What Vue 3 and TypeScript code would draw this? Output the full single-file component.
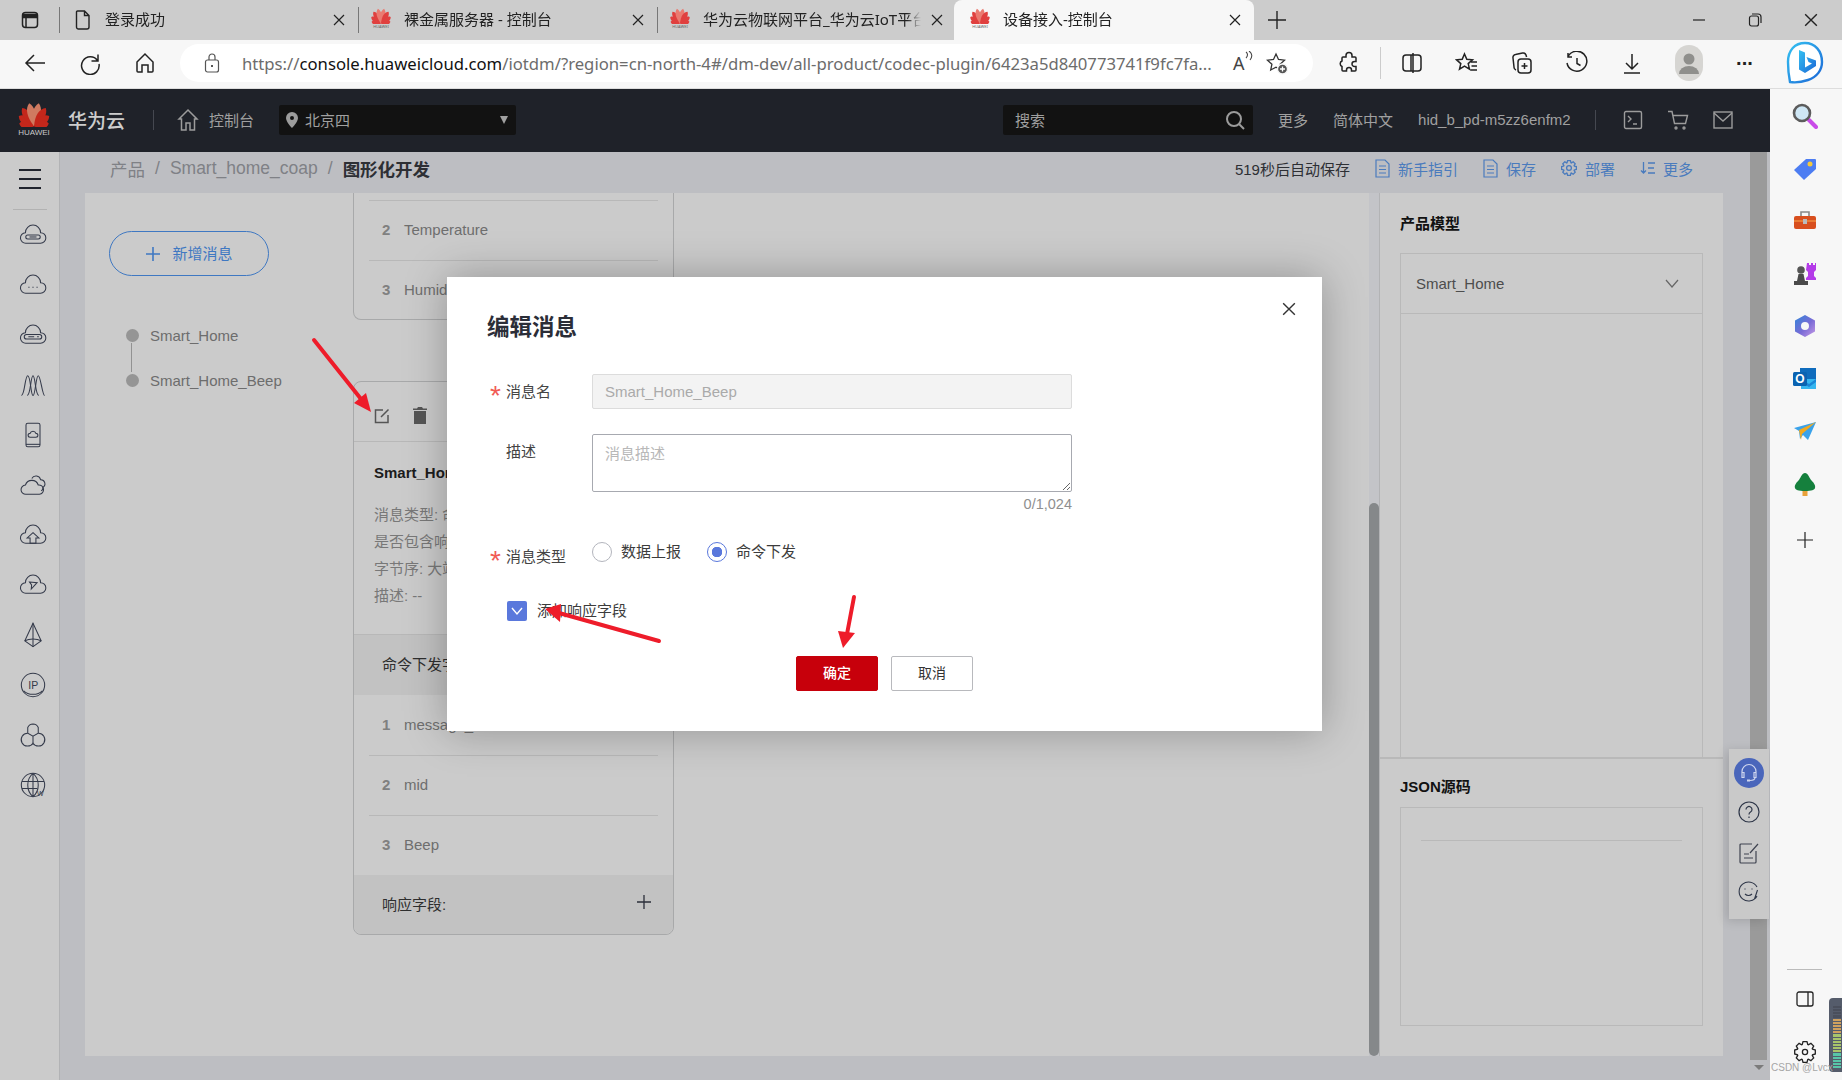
<template>
  <div class="app">
    <svg class="defs" width="0" height="0">
      <symbol id="hw-petals" viewBox="0 0 40 30">
        <path
          v-for="p in petals"
          :key="p.angle"
          :d="p.d"
          :class="{ 'petal-mid': p.mid }"
          :transform="`rotate(${p.angle} 20 29)`"
        />
      </symbol>
      <symbol id="x-mark" viewBox="0 0 12 12">
        <path d="M1 1l10 10M11 1L1 11" fill="none" stroke="currentColor" stroke-width="1.2" />
      </symbol>
    </svg>

    <!-- browser tabs -->
    <div class="tabbar">
      <svg class="strip-icon" width="20" height="20" viewBox="0 0 20 20" fill="none" stroke="#222" stroke-width="1.5">
        <rect x="2.5" y="2.5" width="15" height="15" rx="3" />
        <path d="M3 4.5h14v3H3z" fill="#222" />
        <path d="M6 7v10" />
      </svg>
      <div
        v-for="tab in tabs"
        :key="tab.title"
        class="tab"
        :class="{ active: tab.active }"
      >
        <svg v-if="tab.doc" class="tab-doc" width="16" height="20" viewBox="0 0 16 20" fill="none" stroke="#222" stroke-width="1.4">
          <path d="M2.5 1h7l4.5 4.5V17a2 2 0 0 1-2 2H3.500a2 2 0 0 1-2-2V2a1 1 0 0 1 1-1zM9.500 1v4.500H14" />
        </svg>
        <span v-else class="tab-logo">
          <svg width="22" height="16"><use href="#hw-petals" /></svg>
          <i>HUAWEI</i>
        </span>
        <span class="tab-title">{{ tab.title }}</span>
        <svg class="tab-x" width="12" height="12"><use href="#x-mark" /></svg>
      </div>
      <svg class="new-tab" width="20" height="20" viewBox="0 0 20 20" stroke="#222" stroke-width="1.4"><path d="M10 1v18M1 10h18" /></svg>
      <div class="win-btns">
        <svg width="14" height="14" viewBox="0 0 14 14" stroke="#222" stroke-width="1.2"><path d="M1 7h12" /></svg>
        <svg width="14" height="14" viewBox="0 0 14 14" fill="none" stroke="#222" stroke-width="1.2"><rect x="1.500" y="3" width="9" height="10" rx="2" /><path d="M4 1h6a3 3 0 0 1 3 3v6" /></svg>
        <svg width="14" height="14" style="color:#222"><use href="#x-mark" /></svg>
      </div>
    </div>

    <!-- address bar -->
    <div class="addressbar">
      <div class="nav-btns">
        <svg width="24" height="24" viewBox="0 0 24 24" fill="none" stroke="#222" stroke-width="1.500"><path d="M22 12H3M11 4l-8 8 8 8" /></svg>
        <svg width="24" height="24" viewBox="0 0 24 24" fill="none" stroke="#222" stroke-width="1.500"><path d="M19.500 9.500A8.800 8.800 0 1 0 21 13M20 3.500v6.500h-6.500" /></svg>
        <svg width="24" height="24" viewBox="0 0 24 24" fill="none" stroke="#222" stroke-width="1.500"><path d="M4 11l8-8 8 8v9a1 1 0 0 1-1 1h-4v-7H9v7H5a1 1 0 0 1-1-1z" /></svg>
      </div>
      <div class="url-pill">
        <svg width="16" height="20" viewBox="0 0 16 20" fill="none" stroke="#555" stroke-width="1.200"><rect x="1.500" y="7" width="13" height="12" rx="2" /><path d="M5 7V4a3 3 0 0 1 6 0v3" /><path d="M8 12v2" stroke-width="2" /></svg>
        <span class="url"><em>https://</em><b>console.huaweicloud.com</b><em>/iotdm/?region=cn-north-4#/dm-dev/all-product/codec-plugin/6423a5d840773741f9fc7fa...</em></span>
        <span class="read-a">A<svg width="8" height="14" viewBox="0 0 8 14" fill="none" stroke="#444" stroke-width="1.100"><path d="M1 1c2 1.500 2 4 0 6M4 0c3.500 2.500 3.500 6 1 9" /></svg></span>
        <svg width="24" height="24" viewBox="0 0 24 24" fill="none" stroke="#333" stroke-width="1.300">
          <path d="M11 3l2.500 5.500 6 .7-4.400 4 1.200 5.800L11 16.200 5.700 19l1.200-5.800-4.400-4 6-.7z" />
          <circle cx="17.500" cy="18" r="5" fill="#555" stroke="#f7f7f7" />
          <path d="M17.500 15.500v5M15 18h5" stroke="#fff" />
        </svg>
      </div>
      <div class="tool-btns">
        <svg class="t1" width="24" height="24" viewBox="0 0 24 24" fill="none" stroke="#222" stroke-width="1.500"><path d="M9 6V4.500a3 3 0 0 1 6 0V6h3a1 1 0 0 1 1 1v3.500h-1.500a2.500 2.500 0 0 0 0 5H19V19a1 1 0 0 1-1 1h-3.500v-1a2.500 2.500 0 0 0-5 0v1H6a1 1 0 0 1-1-1v-3.500a3 3 0 0 1 0-5.500V7a1 1 0 0 1 1-1z" /></svg>
        <span class="tool-sep"></span>
        <svg width="24" height="24" viewBox="0 0 24 24" fill="none" stroke="#222" stroke-width="1.500"><rect x="3" y="4" width="18" height="16" rx="3" /><path d="M11 4v16M13 2v20" /></svg>
        <svg width="24" height="24" viewBox="0 0 24 24" fill="none" stroke="#222" stroke-width="1.500"><path d="M9.500 3l2.300 5.300 5.700.5-4.300 3.800 1.300 5.600-5-3-5 3 1.300-5.600L1.500 8.800l5.700-.5zM16 11h6M16.500 15h5.500M15.500 19H22" /></svg>
        <svg width="24" height="24" viewBox="0 0 24 24" fill="none" stroke="#222" stroke-width="1.500"><rect x="8" y="8" width="13" height="14" rx="3" /><path d="M14.500 12v6M11.500 15h6M6 19a3 3 0 0 1-2-3L3 7a3 3 0 0 1 2.500-3.500l7-1.500a3 3 0 0 1 3.500 2l.6 2" /></svg>
        <svg width="24" height="24" viewBox="0 0 24 24" fill="none" stroke="#222" stroke-width="1.500"><path d="M3 5.500A10 10 0 1 1 2 12M3 2v4h4M12 7v5.500l3.500 2" /></svg>
        <svg width="24" height="24" viewBox="0 0 24 24" fill="none" stroke="#222" stroke-width="1.500"><path d="M12 3v15M6 12l6 6 6-6M4 22h16" /></svg>
        <span class="avatar">
          <svg width="28" height="28" viewBox="0 0 28 28" fill="#8f8f8c"><circle cx="14" cy="10" r="5.500" /><path d="M4 25a10 8 0 0 1 20 0z" /></svg>
        </span>
        <span class="dots">···</span>
      </div>
      <div class="bing">
        <svg width="40" height="48" viewBox="0 0 40 48">
          <defs>
            <linearGradient id="bing-g" x1="0" y1="0" x2="1" y2="1">
              <stop offset="0" stop-color="#35c1f1" />
              <stop offset="1" stop-color="#1b66d6" />
            </linearGradient>
          </defs>
          <path d="M20 3C10 3 3 10 3 22c0 8 1 15 2 20 6 1 12 0 18-2 9-3 14-10 14-18C37 11 30 3 20 3z" fill="#fff" stroke="url(#bing-g)" stroke-width="2.400" />
          <path d="M14 10l6 2.500v15l7-4-3.500-1.600-2-5 9.500 3.500v5.500L20 33l-6-3.500z" fill="url(#bing-g)" />
        </svg>
      </div>
    </div>

    <div class="lower">
      <div class="console">
        <header class="top-header">
          <div class="hw-logo">
            <svg width="34" height="25"><use href="#hw-petals" /></svg>
            <span>HUAWEI</span>
          </div>
          <span class="brand">华为云</span>
          <span class="head-sep"></span>
          <svg class="home-ico" width="22" height="24" viewBox="0 0 22 24" fill="none" stroke="#9c9c9c" stroke-width="1.500"><path d="M2 11l9-9 9 9h-2.500v11H13v-7H9v7H4.500V11z" /></svg>
          <span class="console-link">控制台</span>
          <div class="region">
            <svg width="12" height="16" viewBox="0 0 12 16" fill="#9c9c9c"><path d="M6 0a6 6 0 0 1 6 6c0 4-6 10-6 10S0 10 0 6a6 6 0 0 1 6-6zm0 4a2 2 0 1 0 0 4 2 2 0 0 0 0-4z" /></svg>
            <span>北京四</span>
            <i class="caret"></i>
          </div>
          <div class="search">
            <span>搜索</span>
            <svg width="20" height="20" viewBox="0 0 20 20" fill="none" stroke="#9c9c9c" stroke-width="2"><circle cx="9" cy="9" r="7" /><path d="M14 14l5 5" /></svg>
          </div>
          <span class="head-link">更多</span>
          <span class="head-link">简体中文</span>
          <span class="head-link">hid_b_pd-m5zz6enfm2</span>
          <span class="head-sep sep2"></span>
          <div class="head-icons">
            <svg width="20" height="20" viewBox="0 0 20 20" fill="none" stroke="#9c9c9c" stroke-width="1.400"><rect x="1.500" y="1.500" width="17" height="17" rx="1.500" /><path d="M5 6l3 3-3 3M10 14h4" /></svg>
            <svg width="22" height="20" viewBox="0 0 22 20" fill="none" stroke="#9c9c9c" stroke-width="1.400"><path d="M1 1.500h4l2.500 12h11l2-8H6" /><circle cx="9" cy="18" r="1" /><circle cx="17" cy="18" r="1" /></svg>
            <svg width="20" height="20" viewBox="0 0 20 20" fill="none" stroke="#9c9c9c" stroke-width="1.400"><rect x="1" y="2" width="18" height="16" /><path d="M1 3l9 8 9-8" /></svg>
          </div>
        </header>

        <div class="body">
          <nav class="left-nav">
            <div class="hamburger"><i></i><i></i><i></i></div>
            <div class="nav-divider"></div>
            <div v-for="(icon, i) in navIcons" :key="i" class="nav-cell">
              <svg width="28" height="28" viewBox="0 0 24 24" fill="none" stroke="#343a4a" stroke-width="0.9">
                <path v-for="d in icon.paths" :key="d" :d="d" />
                <text v-if="icon.label" :x="icon.lx" :y="icon.ly" :font-size="icon.fs" class="nav-ico-text">{{ icon.label }}</text>
              </svg>
            </div>
          </nav>

          <div class="page">
            <div class="crumbs">
              <span class="crumb">产品</span>
              <span class="crumb slash">/</span>
              <span class="crumb">Smart_home_coap</span>
              <span class="crumb slash">/</span>
              <span class="crumb current">图形化开发</span>
              <span class="autosave">519秒后自动保存</span>
              <a class="act">
                <svg width="15" height="19" viewBox="0 0 15 19" fill="none" stroke="currentColor" stroke-width="1.200"><path d="M1 1h9l4 4v13H1zM4 7h7M4 10.500h7M4 14h7" /></svg>
                新手指引
              </a>
              <a class="act">
                <svg width="15" height="19" viewBox="0 0 15 19" fill="none" stroke="currentColor" stroke-width="1.200"><path d="M1 1h9l4 4v13H1zM4 7h7M4 10.500h7M4 14h7" /></svg>
                保存
              </a>
              <a class="act">
                <svg width="16" height="16" viewBox="0 0 16 16" fill="none" stroke="currentColor" stroke-width="1.300"><path :d="gearSmall" /><circle cx="8" cy="8" r="2.400" /></svg>
                部署
              </a>
              <a class="act">
                <svg width="15" height="14" viewBox="0 0 15 14" fill="none" stroke="currentColor" stroke-width="1.300"><path d="M3.500 1v11M1 9.500L3.500 12 6 9.500M8 2h7M8 7h6M8 12h7" /></svg>
                更多
              </a>
            </div>

            <main class="panel">
              <section class="msg-col">
                <button class="add-btn">
                  <svg width="16" height="16" viewBox="0 0 16 16" stroke="currentColor" stroke-width="1.600"><path d="M8 1v14M1 8h14" /></svg>
                  <span>新增消息</span>
                </button>
                <ul class="msg-list">
                  <li v-for="m in messages" :key="m"><i></i>{{ m }}</li>
                </ul>
              </section>

              <section class="card-col">
                <div class="card upper">
                  <div v-for="(f, i) in upperFields" :key="f" class="field-row lined">
                    <b>{{ i + 2 }}</b><span>{{ f }}</span>
                  </div>
                </div>

                <div class="card lower-card">
                  <div class="card-tools">
                    <svg width="16" height="16" viewBox="0 0 16 16" fill="none" stroke="#555" stroke-width="1.500"><path d="M9 2H1.500v12.500H14V7M7 9l7.500-7.500" /></svg>
                    <svg width="14" height="17" viewBox="0 0 14 17" fill="#555"><path d="M5 0h4l1 1.500h4V3H0V1.500h4zM1 4h12v13H1z" /></svg>
                  </div>
                  <div class="card-info">
                    <h4>Smart_Home_Beep</h4>
                    <p>消息类型: 命令下发</p>
                    <p>是否包含响应字段: 否</p>
                    <p>字节序: 大端模式</p>
                    <p>描述: --</p>
                  </div>
                  <div class="card-section"><span>命令下发字段:</span></div>
                  <div v-for="(f, i) in commandFields" :key="f" class="field-row" :class="{ lined: i > 0 }">
                    <b>{{ i + 1 }}</b><span>{{ f }}</span>
                  </div>
                  <div class="card-section foot">
                    <span>响应字段:</span>
                    <svg width="14" height="14" viewBox="0 0 14 14" stroke="#2b2f3a" stroke-width="1.300"><path d="M7 0v14M0 7h14" /></svg>
                  </div>
                </div>
              </section>

              <section class="canvas"></section>
              <div class="inner-scroll"><i></i></div>

              <aside class="model-col">
                <div class="model-top">
                  <h5>产品模型</h5>
                  <div class="model-box">
                    <div class="model-head">
                      Smart_Home
                      <svg width="14" height="9" viewBox="0 0 14 9" fill="none" stroke="#666" stroke-width="1.200"><path d="M1 1l6 7 6-7" /></svg>
                    </div>
                  </div>
                </div>
                <div class="model-json">
                  <h5>JSON源码</h5>
                  <div class="json-box"><i></i></div>
                </div>
              </aside>
            </main>
          </div>

          <div class="page-scroll"><i></i><b></b></div>

          <div class="help-float">
            <span class="help-main">
              <svg width="22" height="22" viewBox="0 0 22 22" fill="none" stroke="#cfd6ee" stroke-width="1.200"><path d="M4 12V9.500a7 7 0 0 1 14 0V12M4 10.500h2v5H4zM16 10.500h2v5h-2zM17 15.500c0 2-2 3-5 3" /><path d="M9 18.500h3" stroke-width="2" /></svg>
            </span>
            <svg class="h-q" width="22" height="22" viewBox="0 0 22 22" fill="none" stroke="#2e3648" stroke-width="1.200"><circle cx="11" cy="11" r="10" /><path d="M8 8.500a3 3 0 1 1 4.500 2.600c-1 .6-1.500 1.200-1.500 2.400M11 15.500v1.500" /></svg>
            <svg class="h-note" width="20" height="22" viewBox="0 0 20 22" fill="none" stroke="#3f4350" stroke-width="1.200"><path d="M13 2H2a1 1 0 0 0-1 1v17a1 1 0 0 0 1 1h14a1 1 0 0 0 1-1V9M11 11l8-9M5 12h5M5 16h9" /></svg>
            <svg class="h-smile" width="22" height="22" viewBox="0 0 22 22" fill="none" stroke="#2e3648" stroke-width="1.100"><path d="M19 7a9.500 9.500 0 1 0 0 9M7 8.500v1M14 8.500v1M7 14c2 2 5 2 7 0M19.500 10l-3 9" /></svg>
          </div>
        </div>
      </div>

      <aside class="edge-bar">
        <div class="edge-apps">
          <svg width="26" height="26" viewBox="0 0 26 26">
            <path d="M17 17l7 7" stroke="#c94be8" stroke-width="4" stroke-linecap="round" />
            <circle cx="10" cy="10" r="8" fill="#cfe7f5" stroke="#5c5c5c" stroke-width="2.600" />
          </svg>
          <svg width="24" height="24" viewBox="0 0 24 24">
            <path d="M13 2h9a1 1 0 0 1 1 1v9L11 23 1 13z" fill="#4d7df2" />
            <circle cx="17" cy="7" r="2.500" fill="#f5c93a" />
          </svg>
          <svg width="24" height="24" viewBox="0 0 24 24">
            <path d="M8 7V3h8v4" fill="none" stroke="#888" stroke-width="1.600" />
            <rect x="1" y="7" width="22" height="13" rx="2" fill="#d84f1e" />
            <path d="M1 12h22" stroke="#f08a3c" stroke-width="1.500" />
            <rect x="10" y="10" width="4" height="5" fill="#bbb" />
          </svg>
          <svg width="24" height="24" viewBox="0 0 24 24">
            <path d="M14 1h2v2h2V1h2v2h2V1h1v7l-2 2v4l2 2v2H13v-2l2-2v-4l-2-2z" fill="#b43be8" />
            <circle cx="8" cy="8" r="3.800" fill="#555" />
            <path d="M5.500 12h5L12 19h3v4H1v-4h3z" fill="#4a4a4a" />
          </svg>
          <svg width="24" height="24" viewBox="0 0 24 24">
            <defs>
              <linearGradient id="m365" x1="0" y1="0" x2="1" y2="1">
                <stop offset="0" stop-color="#2f86d9" />
                <stop offset=".55" stop-color="#7a6bd6" />
                <stop offset="1" stop-color="#c79be6" />
              </linearGradient>
            </defs>
            <path d="M12 1l10 5.500v11L12 23 2 17.500v-11zM12 8a4 4 0 1 0 0 8 4 4 0 0 0 0-8z" fill="url(#m365)" fill-rule="evenodd" />
          </svg>
          <svg width="24" height="24" viewBox="0 0 24 24">
            <rect x="7" y="1" width="16" height="11" fill="#0f6cbd" />
            <path d="M8 12h15v10H8z" fill="#35b6f0" />
            <path d="M8 12l8 5 7-5v3l-7 5-8-5z" fill="#1a86d6" />
            <rect x="0" y="5" width="14" height="14" rx="1.500" fill="#0a63b1" />
            <text x="7" y="16" text-anchor="middle" class="outlook-o">O</text>
          </svg>
          <svg width="24" height="20" viewBox="0 0 24 20">
            <path d="M1 7l22-6-8 18-5-5-3 4-1-8z" fill="#3aa2ea" />
            <path d="M6 9L23 1 9 13l-1 6z" fill="#f2a91f" />
          </svg>
          <svg width="22" height="24" viewBox="0 0 22 24">
            <rect x="8.500" y="17" width="5" height="7" fill="#e9a23b" />
            <path d="M11 1c3 0 4 4 6 7 2 2 5 5 4 8-.6 2-3 3-10 3S1.600 18 1 16c-1-3 2-6 4-8 2-3 3-7 6-7z" fill="#15803d" />
          </svg>
          <svg class="edge-plus" width="16" height="16" viewBox="0 0 16 16" stroke="#222" stroke-width="1.200"><path d="M8 0v16M0 8h16" /></svg>
        </div>
        <div class="edge-foot">
          <span class="edge-line"></span>
          <svg width="18" height="16" viewBox="0 0 18 16" fill="none" stroke="#222" stroke-width="1.300"><rect x="1" y="1" width="16" height="14" rx="2" /><path d="M12 1v14" /></svg>
          <svg class="edge-gear" width="22" height="22" viewBox="0 0 22 22" fill="none" stroke="#222" stroke-width="1.300"><path :d="gearLarge" /><circle cx="11" cy="11" r="2.600" /></svg>
          <div class="meter"><i v-for="c in meterBars" :key="c.id" :style="{ background: c.color }"></i></div>
          <span class="wm">CSDN @Lvcx</span>
        </div>
      </aside>
    </div>

    <!-- edit dialog -->
    <div class="modal">
      <svg class="modal-x" width="14" height="14"><use href="#x-mark" /></svg>
      <h2>编辑消息</h2>
      <div class="form-row">
        <label class="req">消息名</label>
        <input class="input" disabled value="Smart_Home_Beep" />
      </div>
      <div class="form-row desc">
        <label>描述</label>
        <textarea class="textarea" placeholder="消息描述"></textarea>
      </div>
      <div class="counter">0/1,024</div>
      <div class="form-row type">
        <label class="req">消息类型</label>
        <div class="radios">
          <span class="radio"><i></i>数据上报</span>
          <span class="radio on"><i></i>命令下发</span>
        </div>
      </div>
      <div class="check-row">
        <span class="check">
          <svg width="12" height="10" viewBox="0 0 12 10" fill="none" stroke="#fff" stroke-width="1.400"><path d="M1 2l5 6 5-6" /></svg>
        </span>
        <span class="check-text">添加响应字段</span>
      </div>
      <div class="modal-btns">
        <button class="btn primary">确定</button>
        <button class="btn">取消</button>
      </div>
    </div>

    <!-- annotation arrows -->
    <svg class="arrows" width="1842" height="1080" fill="none" stroke="#ee1c2a" stroke-width="4" stroke-linecap="round">
      <g v-for="a in arrows" :key="a.id">
        <path :d="a.line" />
        <path :d="a.head" fill="#ee1c2a" stroke="none" />
      </g>
    </svg>
  </div>
</template>

<script setup lang="ts">
interface NavIcon {
  paths: string[];
  label?: string;
  lx?: number;
  ly?: number;
  fs?: number;
}

const tabs = [
  { title: '登录成功', doc: true },
  { title: '裸金属服务器 - 控制台' },
  { title: '华为云物联网平台_华为云IoT平台' },
  { title: '设备接入-控制台', active: true },
];

// huawei flower: one petal per angle, the middle ones longer
const petals = [-80, -56, -33, -12, 12, 33, 56, 80].map((angle) => {
  const a = Math.abs(angle);
  const len = a < 20 ? 28 : a < 40 ? 26 : a < 60 ? 22 : 18;
  const w = 6.2;
  return {
    angle,
    mid: a < 20,
    d: `M20 29C${20 - w} ${29 - len * 0.45} ${20 - w} ${29 - len * 0.8} 20 ${29 - len}C${20 + w} ${29 - len * 0.8} ${20 + w} ${29 - len * 0.45} 20 29Z`,
  };
});

function gear(c: number, outer: number, inner: number, teeth = 8): string {
  const pts: string[] = [];
  const step = (Math.PI * 2) / teeth;
  for (let i = 0; i < teeth; i++) {
    const a = i * step;
    for (const [off, r] of [[-0.3, inner], [-0.16, outer], [0.16, outer], [0.3, inner]] as const) {
      const t = a + off * step * 1.5;
      pts.push(`${(c + Math.cos(t) * r).toFixed(2)} ${(c + Math.sin(t) * r).toFixed(2)}`);
    }
  }
  return `M${pts.join('L')}Z`;
}

const gearSmall = gear(8, 7.5, 5.6);
const gearLarge = gear(11, 10.5, 8);

const cloud = 'M6 19a4.500 4.500 0 0 1-.5-9a6.500 6.500 0 0 1 13 0a4.500 4.500 0 0 1 0 9z';
const navIcons: NavIcon[] = [
  { paths: [cloud, 'M7.500 12h9a1.700 1.700 0 0 1 0 3.400h-9a1.700 1.700 0 0 1 0-3.400z', 'M9 13.700h6'] },
  { paths: [cloud, 'M8 14h1M11.500 14h1M15 14h1'] },
  { paths: [cloud, 'M6.500 11.500h11a1.800 1.800 0 0 1 0 4h-11a1.800 1.800 0 0 1 0-4z', 'M8 13.500h5M15.500 13.500h1.500'] },
  { paths: ['M2 21C5 21 5 4 7.500 4S10 21 12 21', 'M7 21c3 0 3-17 5-17s2 17 5 17', 'M12 21c2 0 2.500-17 4.500-17S20 21 22 21'] },
  { paths: ['M7.500 2h9a1.500 1.500 0 0 1 1.500 1.500v17a1.500 1.500 0 0 1-1.500 1.500h-9A1.500 1.500 0 0 1 6 20.500v-17A1.500 1.500 0 0 1 7.500 2z', 'M6 20h12', 'M9.500 14a1.700 1.700 0 0 1 0-3.400a2.600 2.600 0 0 1 5 0a1.700 1.700 0 0 1 0 3.400z'] },
  { paths: ['M6 20a4 4 0 0 1-.5-8a5.800 5.800 0 0 1 11 0a4 4 0 0 1 1 8z', 'M11 6.500a4 4 0 0 1 7.500 1a3.500 3.500 0 0 1 2 6.500a3 3 0 0 1-1.500 3'] },
  { paths: [cloud, 'M12 10l5 4.500h-2.500V19h-5v-4.500H7z'] },
  { paths: [cloud, 'M9 9.500l6.500.5-5 5.500.3-3.500z'] },
  { paths: ['M12 2L5 17l7 5 7-5z', 'M12 2v20', 'M5 17c4-2 10-2 14 0'] },
  { paths: ['M12 2a10 10 0 1 1 0 20a10 10 0 0 1 0-20z', 'M4 17c4 4 12 4 16 0'], label: 'IP', lx: 8, ly: 15.500, fs: 9 },
  { paths: ['M12 2.500a5 5 0 0 1 4.500 3v5L12 13l-4.500-2.500v-5a5 5 0 0 1 4.500-3z', 'M7.500 10.500a5.500 5.500 0 1 0 4.500 8.500a5.500 5.500 0 1 0 4.500-8.500', 'M12 13v6'] },
  { paths: ['M12 2a10 10 0 1 1 0 20a10 10 0 0 1 0-20z', 'M12 2c-6 5-6 15 0 20M12 2c6 5 6 15 0 20M12 2v20M2.500 9h19M2.500 15h13'], label: 'W', lx: 15.500, ly: 21.500, fs: 6 },
];

const messages = ['Smart_Home', 'Smart_Home_Beep'];
const upperFields = ['Temperature', 'Humidity'];
const commandFields = ['message_id', 'mid', 'Beep'];

// meter beside the gear, green at the bottom and dim on top
const meterBars = Array.from({ length: 20 }, (_, i) => ({
  id: i,
  color: i < 4 ? '#4a4f5c' : i < 9 ? '#cfa05e' : i < 15 ? '#a8c46a' : '#58c6a8',
}));

const arrows = [
  { id: 1, line: 'M314 340L361 399', head: 'M371 412L354 403 366 393Z' },
  { id: 2, line: 'M659 641L559 613', head: 'M545 609L561 604 560 622Z' },
  { id: 3, line: 'M854 597L847 634', head: 'M843 648L838 631 855 633Z' },
];
</script>

<style>
body {
  margin: 0;
  overflow: hidden;
}
</style>

<style scoped>
.app {
  position: relative;
  width: 1842px;
  height: 1080px;
  overflow: hidden;
  display: flex;
  flex-direction: column;
  font-family: "Liberation Sans", "Noto Sans CJK SC", sans-serif;
  font-size: 15px;
  color: #6f6f6f;
  background: #cbcbcb;
}

.defs {
  position: absolute;
}
.petal-mid {
  fill: var(--hw-mid);
}

/* browser tabs */
.tabbar {
  height: 40px;
  flex-shrink: 0;
  background: #cccccc;
  display: flex;
  align-items: center;
  font-family: "Noto Sans", "Noto Sans CJK SC", sans-serif;
  color: #222;
  position: relative;
}
.strip-icon {
  margin-left: 20px;
  margin-right: 19px;
}
.tab {
  width: 299px;
  height: 40px;
  display: flex;
  align-items: center;
  box-sizing: border-box;
  position: relative;
  font-size: 15px;
  padding-left: 13px;
}
.tab.active {
  background: #f7f7f7;
  border-radius: 8px 8px 0 0;
  width: 300px;
  margin-left: -2px;
  padding-left: 16px;
}
.tab:not(.active)::before {
  content: "";
  position: absolute;
  left: 0;
  top: 7px;
  height: 26px;
  width: 1px;
  background: #777;
}
.tab-doc {
  margin: 0 14px 0 3px;
}
.tab-logo {
  width: 22px;
  height: 24px;
  fill: #e0403f;
  --hw-mid: #ea7a70;
  display: flex;
  flex-direction: column;
  align-items: center;
  margin-right: 12px;
  margin-left: -1px;
}
.tab-logo i {
  font-style: normal;
  font-size: 4px;
  line-height: 6px;
  color: #666;
}
.tab-title {
  flex: 1;
  white-space: nowrap;
  overflow: hidden;
  padding-bottom: 3px;
  -webkit-mask-image: linear-gradient(to right, #000 calc(100% - 14px), transparent);
  mask-image: linear-gradient(to right, #000 calc(100% - 14px), transparent);
}
.tab-x {
  color: #222;
  margin: 0 13px 0 10px;
  flex-shrink: 0;
}
.new-tab {
  margin-left: 13px;
}
.win-btns {
  position: absolute;
  right: 24px;
  top: 13px;
  display: flex;
  gap: 42px;
}

/* address bar */
.addressbar {
  height: 49px;
  flex-shrink: 0;
  box-sizing: border-box;
  background: #f7f7f7;
  display: flex;
  align-items: center;
  padding-bottom: 2px;
  border-bottom: 1px solid #ddd;
  position: relative;
}
.nav-btns {
  display: flex;
  gap: 31px;
  margin-left: 23px;
  width: 157px;
}
.url-pill {
  width: 1133px;
  height: 38px;
  background: #fff;
  border-radius: 19px;
  display: flex;
  align-items: center;
  box-sizing: border-box;
  padding-left: 24px;
}
.url {
  margin-left: 22px;
  width: 991px;
  font-family: "Noto Sans", sans-serif;
  font-size: 16.700px;
  white-space: nowrap;
  overflow: hidden;
}
.url em {
  font-style: normal;
  color: #6c6c6c;
}
.url b {
  font-weight: 400;
  color: #111;
}
.read-a {
  width: 32px;
  display: flex;
  align-items: flex-start;
  font-family: "Noto Sans", sans-serif;
  font-size: 18px;
  color: #444;
}
.tool-btns {
  display: flex;
  align-items: center;
  margin-left: 24px;
  gap: 31px;
}
.tool-sep {
  width: 1px;
  height: 32px;
  background: #ccc;
  margin: 0 -12px;
}
.avatar {
  width: 28px;
  height: 36px;
  border-radius: 14px;
  background: #d6d5d2;
  overflow: hidden;
  display: flex;
  align-items: center;
}
.dots {
  font-size: 20px;
  font-weight: 700;
  color: #222;
  width: 24px;
  letter-spacing: -1px;
  margin-left: 2px;
}
.bing {
  position: absolute;
  left: 1785px;
  top: 0;
}

/* everything below the address bar */
.lower {
  flex: 1;
  display: flex;
  min-height: 0;
}
.console {
  width: 1770px;
  display: flex;
  flex-direction: column;
}
.top-header {
  height: 63px;
  flex-shrink: 0;
  box-sizing: border-box;
  background: #1f2229;
  display: flex;
  align-items: center;
  color: #a0a0a0;
  padding-bottom: 2px;
}
.hw-logo {
  width: 34px;
  margin-left: 17px;
  fill: #c3271b;
  --hw-mid: #cf7a60;
  display: flex;
  flex-direction: column;
  align-items: center;
}
.hw-logo span {
  font-size: 8px;
  line-height: 10px;
  color: #c8c8c8;
  margin-top: 1px;
}
.brand {
  font-size: 19px;
  color: #cdcdcd;
  margin-left: 17px;
  font-weight: 500;
}
.head-sep {
  width: 1px;
  height: 20px;
  background: #454850;
  margin-left: 28px;
}
.home-ico {
  margin-left: 23px;
}
.console-link {
  margin-left: 10px;
  width: 70px;
}
.region {
  width: 237px;
  height: 30px;
  box-sizing: border-box;
  background: #121212;
  border-radius: 2px;
  display: flex;
  align-items: center;
  padding: 0 8px 0 7px;
  gap: 7px;
}
.region span {
  flex: 1;
}
.caret {
  border-left: 4px solid transparent;
  border-right: 4px solid transparent;
  border-top: 8px solid #a0a0a0;
}
.search {
  margin-left: 487px;
  width: 250px;
  height: 30px;
  box-sizing: border-box;
  background: #121212;
  border-radius: 2px;
  display: flex;
  align-items: center;
  justify-content: space-between;
  padding: 0 8px 0 12px;
}
.head-link {
  margin-left: 25px;
}
.sep2 {
  margin-left: 24px;
}
.head-icons {
  display: flex;
  align-items: center;
  gap: 24px;
  margin-left: 27px;
}

.body {
  flex: 1;
  display: flex;
  min-height: 0;
  position: relative;
}
.left-nav {
  width: 60px;
  flex-shrink: 0;
  box-sizing: border-box;
  border-right: 1px solid #b2b3b5;
  background: #cbcbcb;
  display: flex;
  flex-direction: column;
  align-items: center;
  padding-top: 17px;
}
.hamburger {
  width: 22px;
  display: flex;
  flex-direction: column;
  gap: 7px;
}
.hamburger i {
  height: 2px;
  background: #20242e;
}
.nav-divider {
  width: 34px;
  height: 1px;
  background: #b2b2b2;
  margin-top: 20px;
}
.nav-cell {
  height: 50px;
  display: flex;
  align-items: center;
  justify-content: center;
  margin-left: 6px;
  flex-shrink: 0;
}
.nav-ico-text {
  font-family: "Liberation Sans", sans-serif;
  fill: #343a4a;
  stroke: none;
}

.page {
  width: 1690px;
  background: #bdbec2;
  display: flex;
  flex-direction: column;
  box-sizing: border-box;
  padding: 0 27px 24px 25px;
}
.crumbs {
  height: 41px;
  flex-shrink: 0;
  box-sizing: border-box;
  display: flex;
  align-items: center;
  color: #2d2f34;
  padding: 0 0 9px 25px;
}
.crumb {
  font-size: 17.500px;
  color: #7f8186;
}
.crumb.slash {
  margin: 0 10px;
}
.crumb.current {
  font-weight: 700;
  color: #2d2f34;
}
.autosave {
  margin-left: auto;
}
.act {
  display: inline-flex;
  align-items: center;
  gap: 8px;
  color: #4a7bbd;
  margin-left: 25px;
}
.act:last-child {
  margin-right: 30px;
}

.panel {
  flex: 1;
  min-height: 0;
  background: #cbcbcb;
  display: flex;
}
.msg-col {
  width: 268px;
  flex-shrink: 0;
  box-sizing: border-box;
  padding: 38px 0 0 24px;
}
.add-btn {
  width: 160px;
  height: 45px;
  border: 1px solid #3f78c2;
  border-radius: 23px;
  background: transparent;
  color: #3f78c2;
  font: inherit;
  display: flex;
  align-items: center;
  justify-content: center;
  gap: 11px;
}
.add-btn span {
  padding-bottom: 2px;
}
.msg-list {
  list-style: none;
  margin: 37px 0 0 17px;
  padding: 0;
}
.msg-list li {
  height: 45px;
  line-height: 45px;
  display: flex;
  align-items: center;
  gap: 11px;
  position: relative;
  color: #6d6d6d;
}
.msg-list li i {
  width: 13px;
  height: 13px;
  border-radius: 50%;
  background: #959595;
}
.msg-list li:first-child::after {
  content: "";
  position: absolute;
  left: 5px;
  top: 30px;
  width: 1px;
  height: 29px;
  background: #929292;
}

.card-col {
  width: 321px;
  flex-shrink: 0;
  display: flex;
  flex-direction: column;
  gap: 61px;
}
.card {
  box-sizing: border-box;
  border: 1px solid #a8a9aa;
}
.card.upper {
  height: 127px;
  border-top: 0;
  border-radius: 0 0 8px 8px;
  padding-top: 7px;
}
.field-row {
  height: 60px;
  margin: 0 15px;
  display: flex;
  align-items: center;
  box-sizing: border-box;
  color: #6e6e6e;
  padding-bottom: 2px;
}
.field-row.lined {
  border-top: 1px solid #b8b8b8;
}
.field-row b {
  width: 22px;
  margin-left: 13px;
  color: #808080;
}
.card.lower-card {
  height: 554px;
  border-radius: 8px;
  display: flex;
  flex-direction: column;
}
.card-tools {
  height: 60px;
  flex-shrink: 0;
  box-sizing: border-box;
  border-bottom: 1px solid #b8b8b8;
  display: flex;
  align-items: center;
  padding: 8px 0 0 20px;
  gap: 23px;
}
.card-info {
  height: 193px;
  flex-shrink: 0;
  box-sizing: border-box;
  padding: 21px 20px 0;
  border-bottom: 1px solid #b8b8b8;
}
.card-info h4 {
  margin: 0 0 18px;
  font-size: 15px;
  line-height: 20px;
  color: #1c1c1c;
}
.card-info p {
  margin: 0;
  line-height: 27px;
  color: #787878;
}
.card-section {
  height: 60px;
  flex-shrink: 0;
  box-sizing: border-box;
  background: #c2c2c2;
  display: flex;
  align-items: center;
  justify-content: space-between;
  padding: 0 22px 3px 28px;
  color: #2e2e2e;
}
.card-section.foot {
  border-radius: 0 0 8px 8px;
  flex: 1;
  height: auto;
}
.card-section.foot svg {
  margin-bottom: 2px;
}

.canvas {
  flex: 1;
}
.inner-scroll {
  width: 10px;
  background: #c3c4c8;
  display: flex;
  flex-direction: column;
  justify-content: flex-end;
}
.inner-scroll i {
  height: 553px;
  background: #85888a;
  border-radius: 5px;
}
.model-col {
  width: 344px;
  flex-shrink: 0;
  box-sizing: border-box;
  border-left: 1px solid #b2b3b5;
  display: flex;
  flex-direction: column;
}
.model-col h5 {
  margin: 0;
  font-size: 15px;
  line-height: 20px;
  color: #111;
}
.model-top {
  height: 566px;
  flex-shrink: 0;
  box-sizing: border-box;
  padding: 21px 20px 0;
  border-bottom: 2px solid #b9b9b9;
  display: flex;
  flex-direction: column;
}
.model-box {
  margin-top: 19px;
  flex: 1;
  border: 1px solid #b9b9b9;
  border-bottom: 0;
}
.model-head {
  height: 60px;
  box-sizing: border-box;
  border-bottom: 1px solid #b9b9b9;
  display: flex;
  align-items: center;
  justify-content: space-between;
  padding: 0 23px 0 15px;
  color: #4d4d4d;
}
.model-json {
  padding: 18px 20px 0;
}
.json-box {
  margin-top: 10px;
  height: 219px;
  box-sizing: border-box;
  border: 1px solid #b9b9b9;
  padding: 32px 20px 0;
}
.json-box i {
  display: block;
  height: 1px;
  background: #b9b9b9;
}

.page-scroll {
  width: 20px;
  flex-shrink: 0;
  background: #bcbdc1;
  display: flex;
  flex-direction: column;
  align-items: flex-start;
}
.page-scroll i {
  display: block;
  width: 17px;
  height: 908px;
  background: #9a9a9a;
}
.page-scroll b {
  margin: 5px 0 0 4px;
  border-left: 5px solid transparent;
  border-right: 5px solid transparent;
  border-top: 5px solid #7b7b7b;
}
.help-float {
  position: absolute;
  top: 597px;
  right: 1px;
  width: 40px;
  height: 170px;
  box-sizing: border-box;
  padding-top: 9px;
  background: #c9c9c9;
  box-shadow: -3px 2px 10px rgba(0, 0, 0, 0.14);
  display: flex;
  flex-direction: column;
  align-items: center;
}
.help-main {
  width: 30px;
  height: 30px;
  border-radius: 50%;
  background: #4a66bb;
  display: flex;
  align-items: center;
  justify-content: center;
}
.h-q {
  margin-top: 13px;
}
.h-note {
  margin-top: 19px;
}
.h-smile {
  margin-top: 16px;
}

/* edge sidebar */
.edge-bar {
  width: 72px;
  flex-shrink: 0;
  background: #f7f7f7;
  display: flex;
  flex-direction: column;
  justify-content: space-between;
  position: relative;
}
.edge-apps {
  display: flex;
  flex-direction: column;
  align-items: center;
  padding: 14px 3px 0 0;
}
.edge-apps svg {
  height: 26px;
  margin-bottom: 26.500px;
}
.edge-plus {
  margin-top: 4px;
}
.outlook-o {
  font-family: "Liberation Sans", sans-serif;
  font-size: 12px;
  font-weight: 700;
  fill: #fff;
}
.edge-foot {
  height: 111px;
  position: relative;
  display: flex;
  flex-direction: column;
  align-items: center;
  padding-right: 3px;
}
.edge-line {
  width: 35px;
  height: 1px;
  background: #bbb;
}
.edge-foot > svg {
  margin-top: 21px;
}
.edge-foot > .edge-gear {
  margin-top: 34px;
}
.wm {
  position: absolute;
  left: 1px;
  bottom: 7px;
  font-family: "Liberation Sans", sans-serif;
  font-size: 10px;
  color: #a6a6a6;
  white-space: nowrap;
}
.meter {
  position: absolute;
  left: 59px;
  top: 29px;
  width: 13px;
  height: 74px;
  box-sizing: border-box;
  padding: 8px 1px 4px 4px;
  background: #555c6b;
  border-radius: 4px 0 0 4px;
  display: flex;
  flex-direction: column;
  gap: 1px;
}
.meter i {
  flex: 1;
}

/* dialog */
.modal {
  position: absolute;
  left: 447px;
  top: 277px;
  width: 875px;
  height: 454px;
  box-sizing: border-box;
  padding: 37px 40px 0;
  background: #fff;
  box-shadow: 0 0 40px rgba(0, 0, 0, 0.28);
  color: #303030;
}
.modal h2 {
  margin: 0 0 32px;
  font-size: 22.500px;
  line-height: 28px;
  font-weight: 700;
  color: #2b2e38;
}
.modal-x {
  position: absolute;
  right: 26px;
  top: 25px;
  color: #333;
}
.form-row {
  display: flex;
}
.form-row label {
  width: 86px;
  margin-left: 19px;
  flex-shrink: 0;
  line-height: 35px;
  position: relative;
  color: #444;
}
.form-row label.req::before {
  content: "*";
  position: absolute;
  left: -16px;
  top: 4px;
  color: #f15b55;
  font-size: 28px;
}
.input {
  width: 480px;
  height: 35px;
  box-sizing: border-box;
  border: 1px solid #dcdcdc;
  border-radius: 2px;
  background: #f3f3f3;
  padding: 0 12px;
  font: inherit;
  color: #aaa;
  -webkit-text-fill-color: #aaa;
  opacity: 1;
}
.desc {
  margin-top: 25px;
}
.desc label {
  line-height: 36px;
}
.textarea {
  width: 480px;
  height: 58px;
  box-sizing: border-box;
  border: 1px solid #a7a9b0;
  border-radius: 2px;
  padding: 7px 12px;
  font: inherit;
  outline: none;
}
.textarea::placeholder {
  color: #b8b8b8;
}
.counter {
  width: 585px;
  text-align: right;
  font-size: 14.500px;
  line-height: 20px;
  color: #8f8f8f;
  margin-top: 2px;
}
.type {
  margin-top: 27px;
  height: 22px;
}
.type label {
  line-height: 32px;
}
.radios {
  display: flex;
  gap: 26px;
}
.radio {
  display: flex;
  align-items: center;
  gap: 9px;
  color: #3c3c3c;
  line-height: 22px;
}
.radio i {
  width: 20px;
  height: 20px;
  box-sizing: border-box;
  border: 1px solid #b3b5bd;
  border-radius: 50%;
  background: #fff;
}
.radio.on i {
  border-color: #5a78dc;
  background: radial-gradient(circle, #5a78dc 0 5px, #fff 5.500px);
}
.check-row {
  display: flex;
  align-items: center;
  gap: 10px;
  margin: 38px 0 0 20px;
  height: 20px;
  color: #3c3c3c;
}
.check-text {
  margin-bottom: 3px;
}
.check {
  width: 20px;
  height: 20px;
  border-radius: 2px;
  background: #5a78dc;
  display: flex;
  align-items: center;
  justify-content: center;
}
.modal-btns {
  display: flex;
  justify-content: center;
  gap: 13px;
  margin-top: 35px;
}
.btn {
  width: 82px;
  height: 35px;
  box-sizing: border-box;
  border: 1px solid #b8b9bd;
  border-radius: 2px;
  background: #fff;
  color: #333;
  font: inherit;
  font-size: 14px;
  padding: 0 0 3px;
}
.btn.primary {
  background: #c7000b;
  border-color: #c7000b;
  color: #fff;
  font-weight: 500;
}

.arrows {
  position: absolute;
  left: 0;
  top: 0;
  pointer-events: none;
}
</style>
